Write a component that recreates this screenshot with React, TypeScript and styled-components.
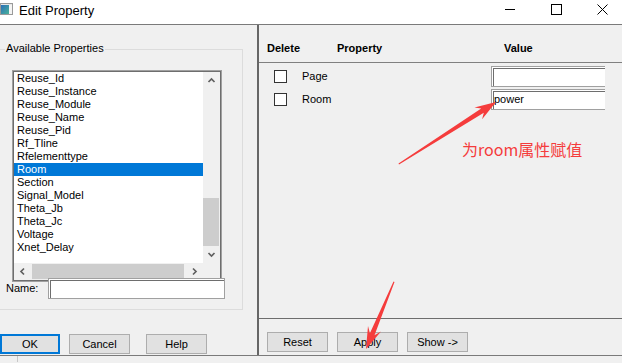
import React from 'react';
import styled, { createGlobalStyle } from 'styled-components';

const Global = createGlobalStyle`
  html, body { margin: 0; padding: 0; }
  body {
    width: 622px; height: 363px; overflow: hidden; background: #f0f0f0;
    font-family: "Liberation Sans", Arial, sans-serif; font-size: 11px; color: #000;
  }
  #root { width: 622px; height: 363px; position: relative; overflow: hidden; }
  * { box-sizing: border-box; }
`;

const Window = styled.div`
  display: flex; flex-direction: column; width: 622px; height: 363px; background: #f0f0f0;
`;

const TitleBar = styled.div`
  height: 25px; background: #fff; border-bottom: 1px solid #7a7a7a;
  display: flex; align-items: flex-start; flex: none;
`;

const AppIconBox = styled.div`
  margin-top: 2px; width: 14px; height: 14px; display: flex;
`;

const Title = styled.span`
  margin: 3px 0 0 5px; font-size: 13px; line-height: 15px; color: #000;
  font-family: "Liberation Sans", Arial, sans-serif;
`;

const Controls = styled.div`
  margin-left: auto; margin-right: -3px; display: flex;
`;

const ControlButton = styled.div`
  width: 46px; height: 18px; display: flex; align-items: center; justify-content: center;
`;

const Main = styled.div`
  display: flex; height: 331px; border-bottom: 1px solid #7a7a7a; flex: none;
`;

const LeftPanel = styled.div`
  width: 257px; display: flex; flex-direction: column; flex: none;
`;

const Divider = styled.div`
  width: 2px; background: #666; flex: none;
`;

const RightPanel = styled.div`
  flex: 1; display: flex; flex-direction: column; min-width: 0;
`;

const GroupBox = styled.div`
  position: relative; margin: 24px 0 0 -1px; width: 244px; height: 261px;
  border: 1px solid #dcdcdc; display: flex; flex-direction: column;
`;

const GroupLabel = styled.span`
  position: absolute; top: -8px; left: 5px; padding: 0 1px; background: #f0f0f0;
  line-height: 13px;
`;

const ListBox = styled.div`
  margin: 20px 0 0 12px; width: 210px; height: 212px;
  border: 1px solid #a0a0a0; box-shadow: inset 0 0 0 1px #6e6e6e;
  padding: 1px; display: grid; grid-template-columns: 189px 17px; grid-template-rows: 191px 17px;
  background: #fff;
`;

const Items = styled.div`
  background: #fff; overflow: hidden;
`;

const Item = styled.div<{ $selected?: boolean }>`
  height: 13px; line-height: 13px; padding-left: 3px; white-space: nowrap;
  background: ${p => (p.$selected ? '#0078d7' : 'transparent')};
  color: ${p => (p.$selected ? '#fff' : '#000')};
`;

const VScroll = styled.div`
  background: #f0f0f0; display: flex; flex-direction: column;
`;

const HScroll = styled.div`
  background: #f0f0f0; display: flex;
`;

const ArrowCell = styled.div`
  width: 17px; height: 17px; display: flex; align-items: center; justify-content: center; flex: none;
`;

const VTrack = styled.div`
  flex: 1; display: flex; flex-direction: column; justify-content: flex-end; padding: 0 1px 0 0;
`;

const VThumb = styled.div`
  height: 48px; background: #cdcdcd;
`;

const HTrack = styled.div`
  flex: 1; display: flex; padding: 1px 0 1px 1px;
`;

const HThumb = styled.div`
  width: 152px; background: #cdcdcd;
`;

const Corner = styled.div`
  background: #f0f0f0;
`;

const NameRow = styled.div`
  margin-top: -4px; padding-left: 6px; display: flex; align-items: center;
`;

const NameLabel = styled.span`
  width: 42px; line-height: 13px;
`;

const TextInput = styled.div<{ $width: number }>`
  width: ${p => p.$width}px; height: 21px; background: #fff;
  border: 1px solid #a0a0a0; box-shadow: inset 1px 1px 0 #fff, inset 2px 2px 0 #6e6e6e;
  padding: 3px 0 0 2px; line-height: 13px; flex: none; white-space: nowrap;
`;

const ButtonRow = styled.div<{ $top: number; $left: number }>`
  display: flex; margin-top: ${p => p.$top}px; padding-left: ${p => p.$left}px; gap: 9px;
`;

const Button = styled.div<{ $focus?: boolean; $width?: number; $gapBefore?: number }>`
  width: ${p => p.$width ?? 61}px; height: 20px; background: #e1e1e1;
  border: ${p => (p.$focus ? '2px solid #0078d7' : '1px solid #adadad')};
  display: flex; align-items: center; justify-content: center; line-height: 13px;
  margin-left: ${p => p.$gapBefore ?? 0}px; flex: none;
`;

const Header = styled.div`
  height: 38px; border-bottom: 1px solid #808080; padding: 17px 0 0 8px;
  display: grid; grid-template-columns: 70px 167px auto; font-weight: bold; line-height: 13px;
  flex: none;
`;

const TableBody = styled.div`
  width: 346px; height: 255px; overflow: hidden; padding-top: 2px; flex: none;
`;

const Row = styled.div`
  height: 23px; display: grid; grid-template-columns: 13px 204px 140px; padding-left: 15px;
  align-items: center;
`;

const CheckBox = styled.div`
  width: 13px; height: 13px; border: 1px solid #333; background: #fff;
`;

const RowLabel = styled.span`
  padding-left: 15px; line-height: 13px;
`;

const Footer = styled.div`
  border-top: 1px solid #6d6d6d; flex: 1; padding-top: 13px;
`;

const StatusStrip = styled.div`
  height: 6px; display: flex; flex: none;
`;

const StatusCell = styled.div`
  width: 18px; border-right: 1px solid #c8c8c8;
`;

const Annotation = styled.svg`
  position: absolute; left: 0; top: 0; pointer-events: none;
`;

const Note = styled.span`
  position: absolute; left: 462px; top: 141px; font-size: 16px; line-height: 16px;
  color: #f53c3c; white-space: nowrap;
  font-family: "Noto Sans CJK SC", "Noto Sans", sans-serif;
`;

const Chevron: React.FC<{ dir: 'up' | 'down' | 'left' | 'right' }> = ({ dir }) => {
  const rot = { up: 0, down: 180, left: -90, right: 90 }[dir];
  return (
    <svg width="9" height="9" viewBox="0 0 9 9">
      <polyline
        points="1.5,6 4.5,3 7.5,6"
        fill="none"
        stroke="#606060"
        strokeWidth="1.7"
        transform={`rotate(${rot} 4.5 4.5)`}
      />
    </svg>
  );
};

const items = [
  'Reuse_Id', 'Reuse_Instance', 'Reuse_Module', 'Reuse_Name', 'Reuse_Pid', 'Rf_Tline',
  'Rfelementtype', 'Room', 'Section', 'Signal_Model', 'Theta_Jb', 'Theta_Jc', 'Voltage', 'Xnet_Delay',
];

const arrow = (pts: number[][]) => pts.map(p => p.join(',')).join(' ');

export default function App() {
  return (
    <>
      <Global />
      <Window>
        <TitleBar>
          <AppIconBox>
            <svg width="14" height="14" viewBox="0 0 14 14">
              <defs>
                <linearGradient id="ig" x1="0" y1="0" x2="1" y2="1">
                  <stop offset="0" stopColor="#2b6fb8" />
                  <stop offset="1" stopColor="#49b29a" />
                </linearGradient>
              </defs>
              <rect x="0.5" y="1.5" width="12" height="11" fill="#e8e8e8" stroke="#9a9a9a" />
              <rect x="1" y="3" width="8" height="9" fill="url(#ig)" />
              <rect x="9" y="3" width="3" height="9" fill="#f4f4f4" />
            </svg>
          </AppIconBox>
          <Title>Edit Property</Title>
          <Controls>
            <ControlButton>
              <svg width="11" height="11" viewBox="0 0 11 11">
                <line x1="0" y1="5.5" x2="10" y2="5.5" stroke="#000" strokeWidth="1" />
              </svg>
            </ControlButton>
            <ControlButton>
              <svg width="11" height="11" viewBox="0 0 11 11">
                <rect x="0.5" y="0.5" width="10" height="10" fill="none" stroke="#000" strokeWidth="1" />
              </svg>
            </ControlButton>
            <ControlButton>
              <svg width="11" height="11" viewBox="0 0 11 11">
                <path d="M0.5 0.5 L10.5 10.5 M10.5 0.5 L0.5 10.5" stroke="#000" strokeWidth="1" />
              </svg>
            </ControlButton>
          </Controls>
        </TitleBar>

        <Main>
          <LeftPanel>
            <GroupBox>
              <GroupLabel>Available Properties</GroupLabel>
              <ListBox>
                <Items>
                  {items.map(it => (
                    <Item key={it} $selected={it === 'Room'}>{it}</Item>
                  ))}
                </Items>
                <VScroll>
                  <ArrowCell><Chevron dir="up" /></ArrowCell>
                  <VTrack><VThumb /></VTrack>
                  <ArrowCell><Chevron dir="down" /></ArrowCell>
                </VScroll>
                <HScroll>
                  <ArrowCell><Chevron dir="left" /></ArrowCell>
                  <HTrack><HThumb /></HTrack>
                  <ArrowCell><Chevron dir="right" /></ArrowCell>
                </HScroll>
                <Corner />
              </ListBox>
              <NameRow>
                <NameLabel>Name:</NameLabel>
                <TextInput $width={177} />
              </NameRow>
            </GroupBox>
            <ButtonRow $top={24} $left={0}>
              <Button $focus $width={60}>OK</Button>
              <Button>Cancel</Button>
              <Button $gapBefore={7}>Help</Button>
            </ButtonRow>
          </LeftPanel>

          <Divider />

          <RightPanel>
            <Header>
              <span>Delete</span>
              <span>Property</span>
              <span>Value</span>
            </Header>
            <TableBody>
              <Row>
                <CheckBox />
                <RowLabel>Page</RowLabel>
                <TextInput $width={140} />
              </Row>
              <Row>
                <CheckBox />
                <RowLabel>Room</RowLabel>
                <TextInput $width={140}>power</TextInput>
              </Row>
            </TableBody>
            <Footer>
              <ButtonRow $top={0} $left={8}>
                <Button>Reset</Button>
                <Button>Apply</Button>
                <Button>Show -&gt;</Button>
              </ButtonRow>
            </Footer>
          </RightPanel>
        </Main>

        <StatusStrip>
          <StatusCell />
        </StatusStrip>
      </Window>

      <Annotation width="622" height="363" viewBox="0 0 622 363">
        <polygon
          fill="#f53c3c"
          points={arrow([
            [399, 164.5], [483.8, 112.7], [482.1, 119.2], [496, 102],
            [474.5, 107.4], [481.2, 108.5], [398.5, 163.5],
          ])}
        />
        <polygon
          fill="#f53c3c"
          points={arrow([
            [394.5, 282], [374.5, 335.2], [381, 331.4], [366, 349],
            [368, 326], [369.9, 333.2], [393.5, 281.5],
          ])}
        />
      </Annotation>
      <Note>为room属性赋值</Note>
    </>
  );
}
